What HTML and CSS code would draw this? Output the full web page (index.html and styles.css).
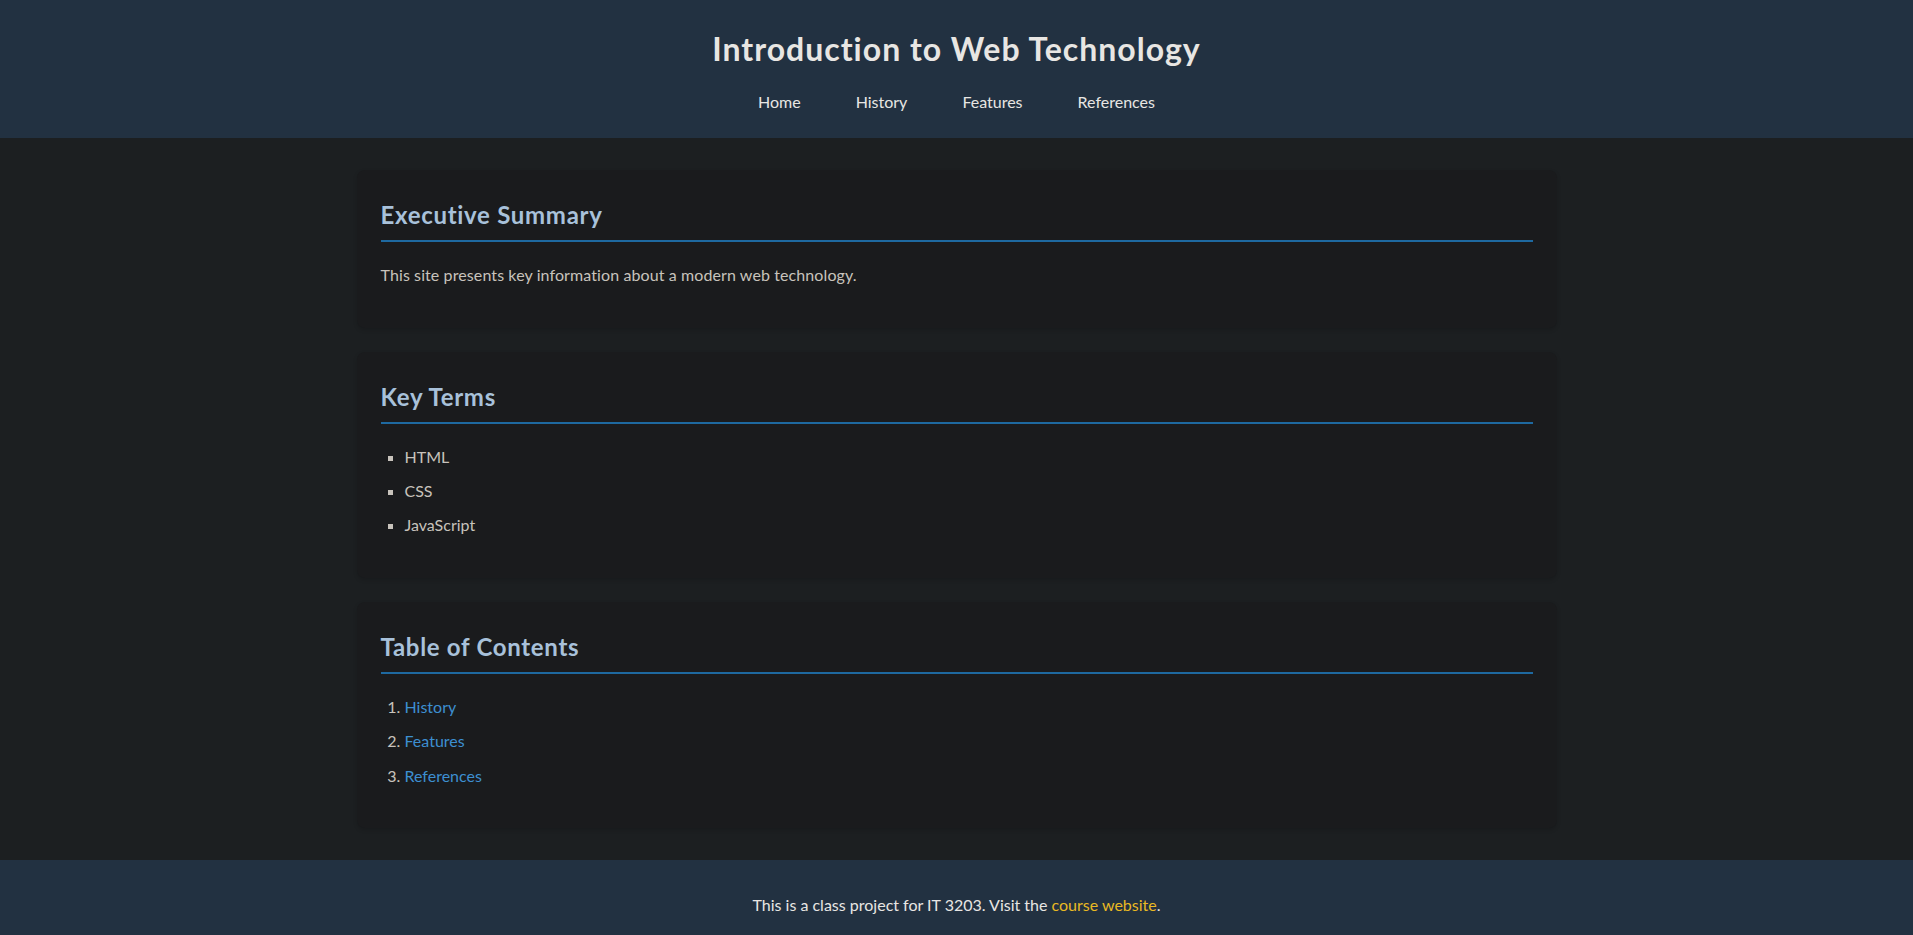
FILE: index.html
```html
<!DOCTYPE html>
<html lang="en">
<head>
<meta charset="utf-8">
<title>Introduction to Web Technology</title>
<link rel="stylesheet" href="styles.css">
</head>
<body>
<header class="site-header">
  <h1 class="site-title">Introduction to Web Technology</h1>
  <nav class="site-nav">
    <ul class="nav-list">
      <li class="nav-item"><a class="nav-link" href="#">Home</a></li>
      <li class="nav-item"><a class="nav-link" href="#history">History</a></li>
      <li class="nav-item"><a class="nav-link" href="#features">Features</a></li>
      <li class="nav-item"><a class="nav-link" href="#references">References</a></li>
    </ul>
  </nav>
</header>
<main class="content">
  <section class="card">
    <h2 class="card-title">Executive Summary</h2>
    <p class="card-text">This site presents key information about a modern web technology.</p>
  </section>
  <section class="card">
    <h2 class="card-title">Key Terms</h2>
    <ul class="term-list">
      <li class="list-item">HTML</li>
      <li class="list-item">CSS</li>
      <li class="list-item">JavaScript</li>
    </ul>
  </section>
  <section class="card">
    <h2 class="card-title">Table of Contents</h2>
    <ol class="toc-list">
      <li class="list-item"><a class="toc-link" href="#history">History</a></li>
      <li class="list-item"><a class="toc-link" href="#features">Features</a></li>
      <li class="list-item"><a class="toc-link" href="#references">References</a></li>
    </ol>
  </section>
</main>
<footer class="site-footer">
  <p class="footer-text">This is a class project for IT 3203. Visit the <a class="footer-link" href="#">course website</a>.</p>
</footer>
</body>
</html>
```
FILE: styles.css
```css
html {
  overflow-y: hidden;
}

body {
  margin: 0;
  font-family: Lato, "Open Sans", sans-serif;
  font-size: 16px;
  line-height: 1.6;
  background: #1c1f21;
  color: #c8c3bc;
}

.site-header {
  background: #223141;
  padding: 23px 0 15px;
  text-align: center;
}

.site-title {
  margin: 0 0 7px;
  font-size: 32px;
  font-weight: 700;
  line-height: 1.6;
  letter-spacing: 1px;
  color: #e8e6e3;
}

.nav-list {
  list-style: none;
  margin: 0;
  padding: 0;
  display: flex;
  justify-content: center;
  gap: 23px;
}

.nav-link {
  display: block;
  padding: 8px 16px;
  color: #e8e6e3;
  text-decoration: none;
}

.content {
  max-width: 1200px;
  margin: 0 auto;
  padding: 32px 0;
}

.card {
  background: #1a1b1d;
  border-radius: 8px;
  padding: 24px;
  margin-bottom: 24px;
  box-shadow: 0 2px 4px rgba(0, 0, 0, 0.15);
}

.card:last-child {
  margin-bottom: 0;
}

.card-title {
  margin: 0 0 20px;
  padding: 2px 0 6px;
  border-bottom: 2px solid #1e69a0;
  font-size: 24px;
  font-weight: 700;
  line-height: 1.6;
  letter-spacing: 0.7px;
  color: #a8c1da;
}

.card-text {
  margin: 16px 0;
  letter-spacing: 0.1px;
}

.term-list,
.toc-list {
  margin: 16px 0;
  padding-left: 24px;
}

.term-list {
  list-style: square;
}

.list-item + .list-item {
  margin-top: 8.5px;
}

.toc-link {
  color: #3d8fd1;
  text-decoration: none;
}

.site-footer {
  background: #223141;
  padding: 32px;
  text-align: center;
  color: #e8e6e3;
}

.footer-text {
  margin: 0;
}

.footer-link {
  color: #e9b923;
  text-decoration: none;
}
```
